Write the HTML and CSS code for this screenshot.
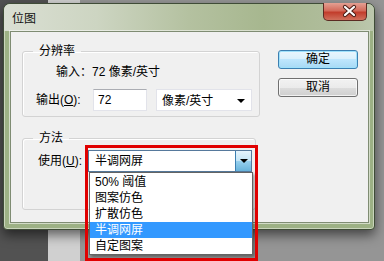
FILE: index.html
```html
<!DOCTYPE html>
<html lang="zh-CN">
<head>
    <meta charset="UTF-8">
    <title>位图</title>
    <link rel="stylesheet" href="styles.css">
</head>
<body>

    <div class="window">
        <div class="titlebar">
            <span class="title">位图</span>
            <div class="close">
                <svg width="44" height="18" viewBox="0 0 44 18">
                    <path d="M21 5 L30 13 M30 5 L21 13" stroke="#4a1d16" stroke-width="4.2" stroke-linecap="round"/>
                    <path d="M21 5 L30 13 M30 5 L21 13" stroke="#fff" stroke-width="2.2" stroke-linecap="round"/>
                </svg>
            </div>
        </div>

        <div class="client">
            <div class="options">
                <fieldset class="group resolution">
                    <legend>分辨率</legend>
                    <div class="row info-row">输入：72 像素/英寸</div>
                    <div class="row output-row">
                        <label class="label">输出(<u>O</u>):</label>
                        <div class="textbox">72</div>
                        <div class="select">像素/英寸<span class="caret"></span></div>
                    </div>
                </fieldset>

                <fieldset class="group method">
                    <legend>方法</legend>
                    <div class="row use-row">
                        <label class="label">使用(<u>U</u>):</label>
                        <div class="combo">
                            <div class="combo-field">半调网屏</div>
                            <div class="combo-btn"><span class="caret"></span></div>
                            <ul class="combo-list">
                                <li>50% 阈值</li>
                                <li>图案仿色</li>
                                <li>扩散仿色</li>
                                <li class="selected">半调网屏</li>
                                <li>自定图案</li>
                            </ul>
                            <div class="mark"></div>
                        </div>
                    </div>
                </fieldset>
            </div>

            <div class="actions">
                <button class="btn default">确定</button>
                <button class="btn">取消</button>
            </div>
        </div>
    </div>

</body>
</html>
```

FILE: styles.css
```css
* {
    box-sizing: border-box;
}

body {
    margin: 0;
    width: 384px;
    height: 261px;
    overflow: hidden;
    padding: 3px 0 0 3px;
    font: 12px/16px "Liberation Sans", "Noto Sans CJK SC", sans-serif;
    color: #000;
    background: linear-gradient(to right, #525252 0 48px, #d0d0d0 48px 80px, #959595 80px);
}

.window {
    width: 372px;
    height: 227px;
    display: flex;
    flex-direction: column;
    border: 1px solid #3f4c37;
    border-radius: 7px 7px 4px 4px;
    background: #9db185;
    box-shadow: 0 5px 12px rgba(0, 0, 0, 0.55), inset 0 0 0 1px rgba(255, 255, 255, 0.45);
}

.titlebar {
    height: 27px;
    display: flex;
    justify-content: space-between;
    align-items: flex-start;
    padding: 0 7px 0 8px;
    border-radius: 6px 6px 0 0;
    background: linear-gradient(to right, #dadfd3 0%, #cdd5c2 25%, #b4c1a0 50%, #a7b78f 70%, #b0bd9c 90%, #bcc7ad 100%);
}

.title {
    padding-top: 7px;
    color: #111;
}

.close {
    width: 44px;
    height: 18px;
    margin-top: -1px;
    border: 1px solid #5b2a22;
    border-top: none;
    border-radius: 0 0 5px 5px;
    background: linear-gradient(#e4a093 0%, #d36a5a 45%, #c23d2c 55%, #d0705c 100%);
}

.close svg {
    display: block;
    margin-top: -1px;
}

.client {
    flex: 1;
    display: flex;
    margin: 0 5px 6px 6px;
    padding: 12px 0 0 11px;
    border: 1px solid #7f8c73;
    background: #f0f0f0;
    box-shadow: 0 0 0 1px rgba(255, 255, 255, 0.55);
}

.options {
    width: 238px;
}

.group {
    margin: 0;
    padding: 0;
    min-width: 0;
    border: 1px solid #d3d3d3;
    border-radius: 3px;
    box-shadow: inset 1px 1px 0 #fff;
}

.group legend {
    margin-left: 10px;
    padding: 0 6px;
    line-height: 14px;
}

.resolution {
    padding-bottom: 5px;
}

.method {
    width: 234px;
    margin-top: 14px;
    padding-bottom: 37px;
}

.row {
    display: flex;
    align-items: center;
}

.info-row {
    margin-top: 6px;
    padding-left: 33px;
}

.output-row {
    margin-top: 9px;
    padding-left: 13px;
}

.use-row {
    margin-top: 5px;
    padding-left: 15px;
}

.output-row .label {
    width: 57px;
}

.use-row .label {
    width: 50px;
}

.textbox {
    width: 54px;
    height: 22px;
    padding: 2px 0 0 4px;
    background: #fff;
    border: 1px solid #e2e3ea;
    border-top-color: #abadb3;
}

.select {
    position: relative;
    width: 96px;
    height: 22px;
    margin-left: 9px;
    padding: 3px 0 0 5px;
    background: #fff;
    border: 1px solid #e2e3ea;
}

.caret {
    width: 0;
    height: 0;
    border-left: 4px solid transparent;
    border-right: 4px solid transparent;
    border-top: 4px solid #000;
}

.select .caret {
    position: absolute;
    right: 6px;
    top: 9px;
}

.combo {
    position: relative;
    display: flex;
    width: 164px;
    height: 22px;
    border: 1px solid #56799c;
    background: #fff;
}

.combo-field {
    flex: 1;
    padding: 2px 0 0 6px;
}

.combo-btn {
    width: 16px;
    display: flex;
    align-items: center;
    justify-content: center;
    border-left: 1px solid #3c7fb1;
    background: linear-gradient(#e5f4fc 0%, #c4e5f6 50%, #98d1ef 50%, #68b3db 100%);
}

.combo-list {
    position: absolute;
    top: 21px;
    left: 0;
    width: 164px;
    margin: 0;
    padding: 1px 0 0;
    list-style: none;
    height: 83px;
    background: #fff;
    border: 1px solid #646464;
    box-shadow: 2px 2px 3px rgba(0, 0, 0, 0.35);
}

.combo-list li {
    height: 16px;
    padding-left: 5px;
    line-height: 16px;
}

.combo-list .selected {
    background: #3399ff;
    color: #fff;
}

.mark {
    position: absolute;
    left: -4px;
    top: -6px;
    width: 173px;
    height: 116px;
    border: 3px solid #e00000;
}

.actions {
    display: flex;
    flex-direction: column;
    gap: 9px;
    margin-left: 18px;
    padding-top: 6px;
}

.btn {
    width: 80px;
    height: 19px;
    padding: 0;
    font: inherit;
    line-height: 15px;
    border: 1px solid #707070;
    border-radius: 3px;
    background: linear-gradient(#f2f2f2 0%, #ebebeb 50%, #dddddd 50%, #cfcfcf 100%);
    box-shadow: inset 0 0 0 1px rgba(255, 255, 255, 0.7);
}

.btn.default {
    border-color: #3c7fb1;
    background: linear-gradient(#eaf6fd 0%, #d9f0fc 50%, #bee6fd 50%, #a7d9f5 100%);
    box-shadow: inset 0 0 0 1px #9fe1fb;
}
```
